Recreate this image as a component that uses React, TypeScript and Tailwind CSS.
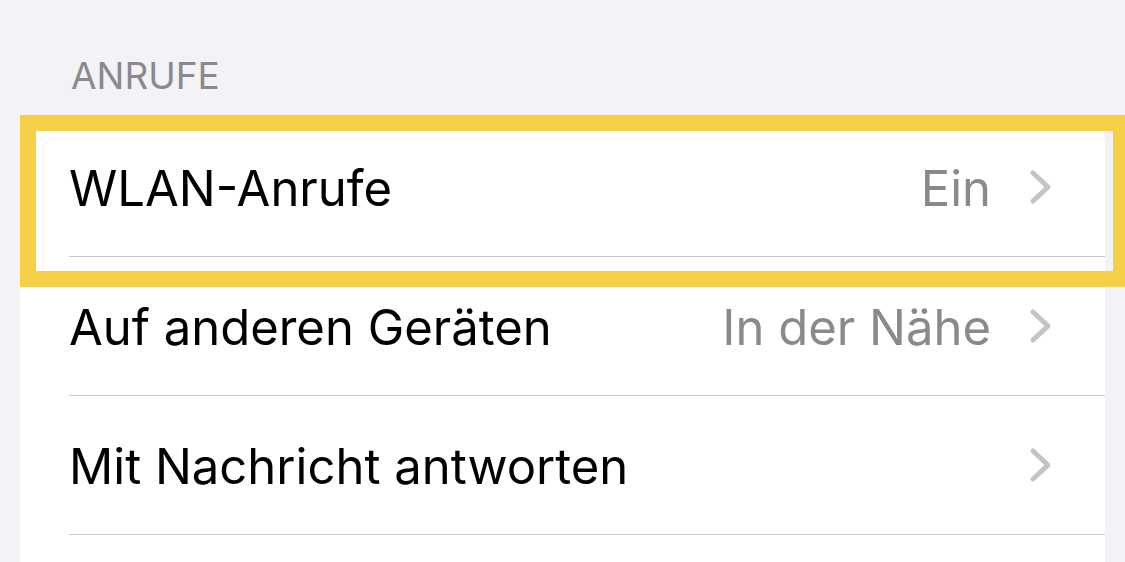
const rows = [
  { label: "WLAN-Anrufe", value: "Ein" },
  { label: "Auf anderen Geräten", value: "In der Nähe" },
  { label: "Mit Nachricht antworten", value: "" },
  { label: "", value: "" },
];

const Chevron = () => (
  <svg width="24" height="36" viewBox="0 0 24 36" fill="none" className="shrink-0">
    <path d="M4 4l15 14L4 32" stroke="#c4c4c7" strokeWidth="5" strokeLinecap="round" strokeLinejoin="round" />
  </svg>
);

export default function App() {
  return (
    <div
      className="relative h-[562px] w-[1125px] overflow-hidden bg-[#f2f2f7]"
      style={{ fontFamily: "Inter, 'Noto Sans', sans-serif" }}
    >
      <div className="pl-[71px] pt-[54px] text-[37px] leading-[44px] text-[#8a8a8e]">ANRUFE</div>

      {/* grouped list */}
      <div className="ml-[20px] mr-[20px] mt-[20px] rounded-t-[20px] bg-white">
        {rows.map((r, i) => (
          <div key={i} className="pl-[49px]">
            <div className="flex h-[139px] items-center border-b border-[#c8c8cc] pr-[52px]">
              <span className="flex-1 pt-[3px] text-[49px] text-black">{r.label}</span>
              {r.value && <span className="mr-[38px] pt-[3px] text-[49px] text-[#8a8a8e]">{r.value}</span>}
              {i < 3 && <Chevron />}
            </div>
          </div>
        ))}
      </div>

      {/* highlight frame */}
      <div className="absolute left-[20px] top-[115px] h-[172px] w-[1109px] border-[16px] border-[#f5cf45]" />
    </div>
  );
}
